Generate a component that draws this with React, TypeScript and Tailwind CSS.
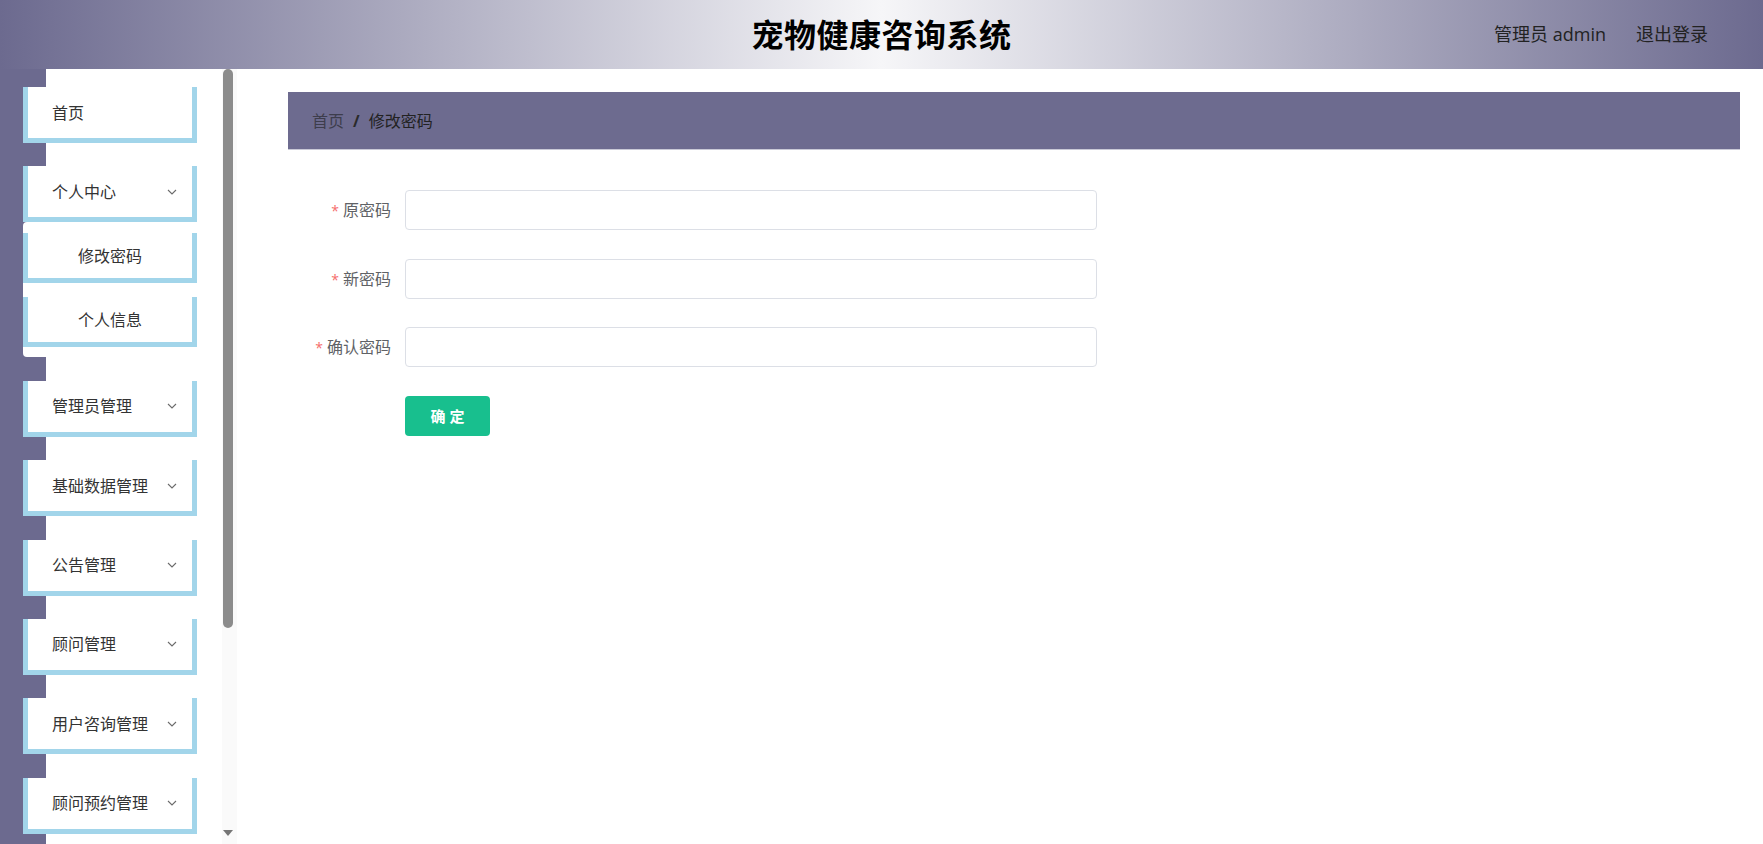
import React from "react";

const menus = [
  { title: "首页" },
  { title: "个人中心", children: ["修改密码", "个人信息"] },
  { title: "管理员管理", arrow: true },
  { title: "基础数据管理", arrow: true },
  { title: "公告管理", arrow: true },
  { title: "顾问管理", arrow: true },
  { title: "用户咨询管理", arrow: true },
  { title: "顾问预约管理", arrow: true },
];

const fields = ["原密码", "新密码", "确认密码"];

function Chevron() {
  return (
    <svg width="10" height="6" viewBox="0 0 10 6" fill="none" className="shrink-0">
      <polyline points="1,1 5,5 9,1" stroke="#6b6b6b" strokeWidth="1.1" />
    </svg>
  );
}

export default function App() {
  return (
    <div className="h-screen flex flex-col overflow-hidden bg-white text-[#333] font-['Open_Sans','Noto_Sans_CJK_SC',sans-serif]">
      {/* Header */}
      <header className="h-[69px] shrink-0 relative flex items-center justify-center bg-[linear-gradient(to_right,#6c6a8f,#f6f6f8_50%,#6c6a8f)]">
        <h1 className="text-[32px] font-bold text-black tracking-[0.5px]">宠物健康咨询系统</h1>
        <div className="absolute right-[55px] top-0 h-full flex items-center gap-[30px] text-[18px] text-[#222]">
          <span>管理员 admin</span>
          <span>退出登录</span>
        </div>
      </header>

      <div className="flex flex-1 min-h-0">
        {/* Sidebar */}
        <aside className="w-[237px] shrink-0 flex bg-white">
          <div className="w-[222px] overflow-hidden">
            <div className="pt-[18px] pb-[30px] bg-[linear-gradient(to_right,#6c6a8f_46px,#ffffff_46px)]">
              {menus.map((m, i) => (
                <div key={m.title} className={i === 0 ? "" : "mt-[23.4px]"}>
                  <div className="ml-[23px] w-[174px] h-[56px] bg-white border-l-[5px] border-r-[5px] border-b-[5px] border-[#a2d5ea] flex items-center justify-between pl-[24px] pr-[15px] text-[16px] text-[#333]">
                    <span>{m.title}</span>
                    {(m.arrow || m.children) && <Chevron />}
                  </div>
                  {m.children && (
                    <div className="ml-[23px] bg-white rounded-l-[4px] pt-[11px] pb-[10px] flex flex-col gap-[14px]">
                      {m.children.map((c) => (
                        <div
                          key={c}
                          className="w-[174px] h-[50px] border-l-[5px] border-r-[5px] border-b-[5px] border-[#a2d5ea] flex items-center justify-center text-[16px] text-[#333]"
                        >
                          {c}
                        </div>
                      ))}
                    </div>
                  )}
                </div>
              ))}
            </div>
          </div>
          {/* scrollbar */}
          <div className="w-[15px] bg-[#fafafa] flex flex-col justify-between items-start pl-[1px] pb-[8px]">
            <div className="w-[10px] h-[559px] rounded-[5px] bg-[#8c8c8c]" />
            <div className="w-0 h-0 border-l-[5px] border-r-[5px] border-t-[6px] border-l-transparent border-r-transparent border-t-[#767676]" />
          </div>
        </aside>

        {/* Main */}
        <main className="flex-1 min-w-0 pt-[23px] pl-[51px] pr-[23px]">
          <div className="h-[58px] bg-[#6d6b8f] border-b border-[#c9c9d6] flex items-center pl-[24px] text-[16px]">
            <span className="text-[#3d3d4c]">首页</span>
            <span className="mx-[9px] font-bold text-[#2a2a2a]">/</span>
            <span className="text-[#222]">修改密码</span>
          </div>

          <form className="mt-[40px] flex flex-col gap-[28.7px]">
            {fields.map((f) => (
              <div key={f} className="flex items-center">
                <label className="w-[117px] pr-[14px] text-right text-[16px] text-[#606266]">
                  <span className="text-[#f56c6c] mr-[4px] text-[14px]">*</span>
                  {f}
                </label>
                <input
                  type="password"
                  className="w-[692px] h-[40px] rounded-[4px] border border-[#dcdfe6] bg-white px-[15px] outline-none"
                />
              </div>
            ))}
            <div className="flex">
              <div className="w-[117px]" />
              <button
                type="button"
                className="w-[85px] h-[40px] rounded-[4px] bg-[#18bf8e] text-white text-[15px] font-bold"
              >
                确 定
              </button>
            </div>
          </form>
        </main>
      </div>
    </div>
  );
}
